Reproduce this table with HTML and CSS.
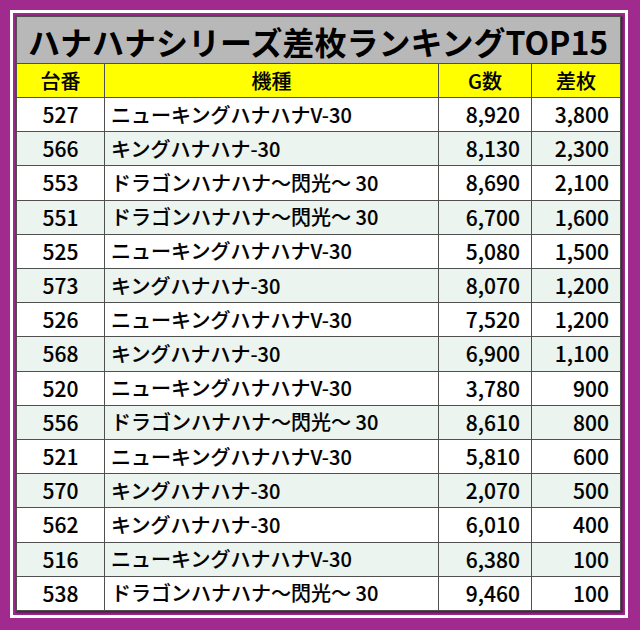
FILE: index.html
```html
<!DOCTYPE html>
<html lang="ja">
<head>
<meta charset="utf-8">
<title>ハナハナシリーズ差枚ランキングTOP15</title>
<link rel="stylesheet" href="styles.css">
</head>
<body>
<div class="frame">
  <div class="sheet">
    <div class="title">ハナハナシリーズ差枚ランキングTOP15</div>
    <div class="cell head">台番</div>
    <div class="cell head">機種</div>
    <div class="cell head">G数</div>
    <div class="cell head">差枚</div>

    <div class="cell no">527</div><div class="cell name">ニューキングハナハナV-30</div><div class="cell num">8,920</div><div class="cell num">3,800</div>
    <div class="cell no alt">566</div><div class="cell name alt">キングハナハナ-30</div><div class="cell num alt">8,130</div><div class="cell num alt">2,300</div>
    <div class="cell no">553</div><div class="cell name">ドラゴンハナハナ～閃光～ 30</div><div class="cell num">8,690</div><div class="cell num">2,100</div>
    <div class="cell no alt">551</div><div class="cell name alt">ドラゴンハナハナ～閃光～ 30</div><div class="cell num alt">6,700</div><div class="cell num alt">1,600</div>
    <div class="cell no">525</div><div class="cell name">ニューキングハナハナV-30</div><div class="cell num">5,080</div><div class="cell num">1,500</div>
    <div class="cell no alt">573</div><div class="cell name alt">キングハナハナ-30</div><div class="cell num alt">8,070</div><div class="cell num alt">1,200</div>
    <div class="cell no">526</div><div class="cell name">ニューキングハナハナV-30</div><div class="cell num">7,520</div><div class="cell num">1,200</div>
    <div class="cell no alt">568</div><div class="cell name alt">キングハナハナ-30</div><div class="cell num alt">6,900</div><div class="cell num alt">1,100</div>
    <div class="cell no">520</div><div class="cell name">ニューキングハナハナV-30</div><div class="cell num">3,780</div><div class="cell num">900</div>
    <div class="cell no alt">556</div><div class="cell name alt">ドラゴンハナハナ～閃光～ 30</div><div class="cell num alt">8,610</div><div class="cell num alt">800</div>
    <div class="cell no">521</div><div class="cell name">ニューキングハナハナV-30</div><div class="cell num">5,810</div><div class="cell num">600</div>
    <div class="cell no alt">570</div><div class="cell name alt">キングハナハナ-30</div><div class="cell num alt">2,070</div><div class="cell num alt">500</div>
    <div class="cell no">562</div><div class="cell name">キングハナハナ-30</div><div class="cell num">6,010</div><div class="cell num">400</div>
    <div class="cell no alt">516</div><div class="cell name alt">ニューキングハナハナV-30</div><div class="cell num alt">6,380</div><div class="cell num alt">100</div>
    <div class="cell no">538</div><div class="cell name">ドラゴンハナハナ～閃光～ 30</div><div class="cell num">9,460</div><div class="cell num">100</div>
  </div>
</div>
</body>
</html>
```

FILE: styles.css
```css
html, body {
  margin: 0;
  padding: 0;
}
body {
  background: #a02a8e;
  width: 640px;
  height: 630px;
  box-sizing: border-box;
  padding: 10px 12px 12px 10px;
  font-family: "Noto Sans CJK JP", "Noto Sans", sans-serif;
  color: #000;
}
.frame {
  box-sizing: border-box;
  width: 618px;
  height: 608px;
  border: 3px solid #ffffff;
  padding: 3px 4px 4px 3px;
}
.sheet {
  box-sizing: border-box;
  width: 605px;
  height: 595px;
  display: grid;
  grid-template-columns: 88px 334px 93px 1fr;
  grid-template-rows: 47px 34px repeat(15, 1fr);
  border-left: 1px solid #505050;
  border-top: 1px solid #505050;
  background: #fff;
  box-shadow: 1px 1px 2px 1px rgba(0, 0, 0, 0.45);
}
.title {
  grid-column: 1 / -1;
  background: #b8b8b8;
  border-right: 1px solid #505050;
  border-bottom: 1px solid #505050;
  font-size: 32px;
  font-weight: 700;
  line-height: 1;
  display: flex;
  align-items: center;
  padding-left: 11px;
  padding-top: 2px;
  white-space: nowrap;
}
.cell {
  border-right: 1px solid #505050;
  border-bottom: 1px solid #505050;
  font-size: 20px;
  font-weight: 500;
  -webkit-text-stroke: 0.12px #000;
  line-height: 1;
  display: flex;
  align-items: center;
  white-space: nowrap;
  background: #ffffff;
}
.head {
  background: #ffff00;
  justify-content: center;
}
.no {
  justify-content: center;
  font-size: 21px;
}
.name {
  padding-left: 6px;
}
.num {
  justify-content: flex-end;
  padding-right: 11px;
  font-size: 21px;
}
.alt {
  background: #ebf4ee;
}
```
